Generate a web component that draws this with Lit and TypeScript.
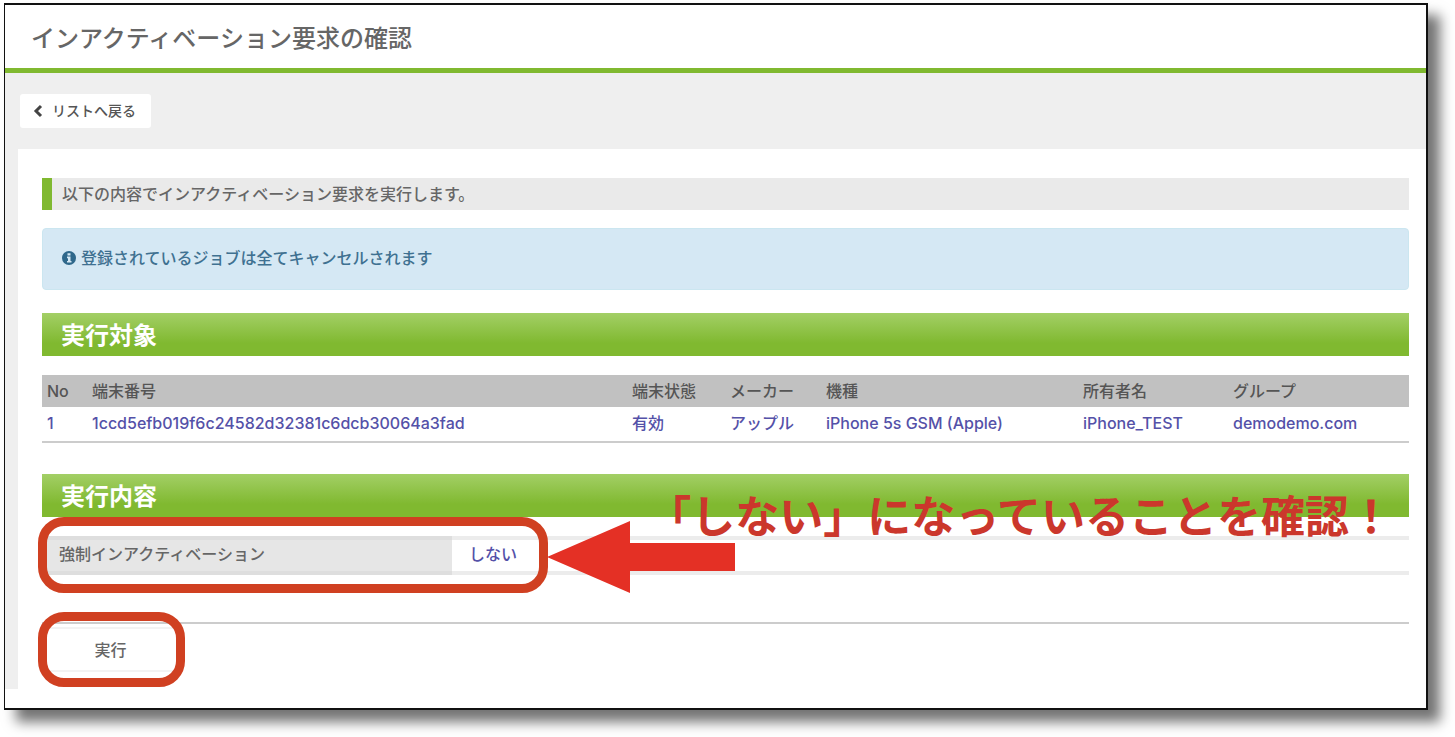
import { LitElement, html, css } from "lit";
import { customElement } from "lit/decorators.js";

interface Device {
  no: string;
  id: string;
  state: string;
  maker: string;
  model: string;
  owner: string;
  group: string;
}

@customElement("app-root")
export class AppRoot extends LitElement {
  static styles = css`
    :host {
      display: block;
      padding: 3px 27px 27px 4px;
      background: #fff;
      color: #666;
      font-family: Inter, "Noto Sans CJK JP", sans-serif;
      font-size: 16px;
      font-weight: 500;
      line-height: 24px;
    }
    * {
      box-sizing: border-box;
    }
    .frame {
      border: 2px solid #111;
      border-left-width: 1px;
      padding-bottom: 19px;
      background: #fff;
      box-shadow: 12px 12px 12px rgba(0, 0, 0, 0.55);
    }
    .header {
      padding: 16px 26px 11px;
      border-bottom: 5px solid #80b930;
    }
    .title {
      margin: 0;
      font-size: 24px;
      line-height: 36px;
      font-weight: 500;
    }
    .body {
      padding: 21px 0 0 13px;
      background: #efefef;
    }
    .back {
      display: inline-flex;
      align-items: center;
      gap: 9px;
      height: 34px;
      margin: 0 0 21px 2px;
      padding: 0 15px 1px 13px;
      border-radius: 3px;
      background: #fff;
      color: #555;
      font-size: 14px;
      text-decoration: none;
    }
    .chevron {
      width: 10px;
      height: 14px;
    }
    .panel {
      padding: 29px 17px 17px 24px;
      background: #fff;
    }
    .notice {
      margin: 0 0 18px;
      padding: 4px 10px;
      border-left: 10px solid #80b930;
      background: #eaeaea;
    }
    .alert {
      display: flex;
      align-items: center;
      gap: 5px;
      margin: 0 0 23px;
      padding: 17px 19px 19px;
      border: 1px solid #cbe6f0;
      border-radius: 4px;
      background: #d5e8f4;
      color: #3f7191;
    }
    .info {
      width: 14px;
      height: 14px;
    }
    .heading {
      margin: 0 0 19px;
      padding: 5px 19px 2px;
      background: linear-gradient(#a3cf66, #80b930 70%);
      color: #fff;
      font-size: 24px;
      line-height: 36px;
      font-weight: 700;
    }
    .devices,
    .settings {
      width: 100%;
      table-layout: fixed;
      border-collapse: separate;
      border-spacing: 0;
      text-align: left;
    }
    .devices {
      margin-bottom: 31px;
      border-bottom: 2px solid #ccc;
      white-space: nowrap;
    }
    .devices th {
      padding: 4px 5px;
      background: #c1c1c1;
      color: #555;
      font-weight: 500;
    }
    .devices td {
      padding: 4px 5px 6px;
      color: #5451a8;
    }
    .c-no { width: 45px; }
    .c-id { width: 540px; }
    .c-state { width: 98px; }
    .c-maker { width: 96px; }
    .c-model { width: 257px; }
    .c-owner { width: 150px; }
    .c-group { width: 181px; }
    .setting-area {
      position: relative;
      padding-bottom: 47px;
      border-bottom: 2px solid #ccc;
    }
    .settings th,
    .settings td {
      padding: 2px 17px 5px;
      border-top: 4px solid #ececec;
      border-bottom: 4px solid #ececec;
      font-weight: 500;
    }
    .settings th {
      width: 30%;
      border-color: #dedede;
      background: #e6e6e6;
    }
    .settings td {
      color: #5451a8;
    }
    .actions {
      position: relative;
      display: flex;
      padding-top: 3px;
    }
    .run {
      width: 137px;
      height: 45px;
      border: 2px solid #f3f3f3;
      border-radius: 4px;
      background: #fff;
      color: #666;
      font: inherit;
      cursor: pointer;
    }
    .ring {
      position: absolute;
      left: -4px;
      border: 9px solid #d04021;
      border-radius: 26px;
      pointer-events: none;
    }
    .ring-setting {
      top: -19px;
      width: calc(30% + 100px);
      height: 76px;
    }
    .ring-run {
      top: -12px;
      width: 147px;
      height: 75px;
    }
    .arrow {
      position: absolute;
      left: calc(30% + 95px);
      top: -15px;
      width: 188px;
      height: 72px;
    }
    .remark {
      position: absolute;
      right: 16px;
      top: -52px;
      margin: 0;
      color: #cb372c;
      font-family: "Noto Sans CJK JP", sans-serif;
      font-size: 44px;
      font-weight: 700;
      line-height: 60px;
      white-space: nowrap;
    }
  `;

  private devices: Device[] = [
    {
      no: "1",
      id: "1ccd5efb019f6c24582d32381c6dcb30064a3fad",
      state: "有効",
      maker: "アップル",
      model: "iPhone 5s GSM (Apple)",
      owner: "iPhone_TEST",
      group: "demodemo.com",
    },
  ];

  render() {
    return html`
      <main class="frame">
        <header class="header">
          <h1 class="title">インアクティベーション要求の確認</h1>
        </header>
        <div class="body">
          <a class="back" href="#list">
            <svg class="chevron" viewBox="0 0 10 14" aria-hidden="true">
              <path d="M8 2 3 7l5 5" fill="none" stroke="#444" stroke-width="3" />
            </svg>
            リストへ戻る
          </a>
          <div class="panel">
            <p class="notice">以下の内容でインアクティベーション要求を実行します。</p>
            <p class="alert">
              <svg class="info" viewBox="0 0 14 14" aria-hidden="true">
                <circle cx="7" cy="7" r="7" fill="#2f688b" />
                <path d="M5.5 2.3h3v2.2h-3zM5 5.6h3.5v4.3h1v1.6H5V9.900h1V7.200H5z" fill="#d5e8f4" />
              </svg>
              登録されているジョブは全てキャンセルされます
            </p>
            <h2 class="heading">実行対象</h2>
            <table class="devices">
              <colgroup>
                <col class="c-no" />
                <col class="c-id" />
                <col class="c-state" />
                <col class="c-maker" />
                <col class="c-model" />
                <col class="c-owner" />
                <col class="c-group" />
              </colgroup>
              <thead>
                <tr>
                  <th scope="col">No</th>
                  <th scope="col">端末番号</th>
                  <th scope="col">端末状態</th>
                  <th scope="col">メーカー</th>
                  <th scope="col">機種</th>
                  <th scope="col">所有者名</th>
                  <th scope="col">グループ</th>
                </tr>
              </thead>
              <tbody>
                ${this.devices.map(
                  (d) => html`<tr>
                    <td>${d.no}</td>
                    <td>${d.id}</td>
                    <td>${d.state}</td>
                    <td>${d.maker}</td>
                    <td>${d.model}</td>
                    <td>${d.owner}</td>
                    <td>${d.group}</td>
                  </tr>`
                )}
              </tbody>
            </table>
            <h2 class="heading">実行内容</h2>
            <div class="setting-area">
              <table class="settings">
                <tbody>
                  <tr>
                    <th scope="row">強制インアクティベーション</th>
                    <td>しない</td>
                  </tr>
                </tbody>
              </table>
              <div class="ring ring-setting"></div>
              <svg class="arrow" viewBox="0 0 188 72" aria-hidden="true">
                <path d="M0 36 83 0v22h105v28H83v22z" fill="#e43025" />
              </svg>
              <p class="remark">「しない」になっていることを確認！</p>
            </div>
            <div class="actions">
              <button class="run" type="button">実行</button>
              <div class="ring ring-run"></div>
            </div>
          </div>
        </div>
      </main>
    `;
  }
}
